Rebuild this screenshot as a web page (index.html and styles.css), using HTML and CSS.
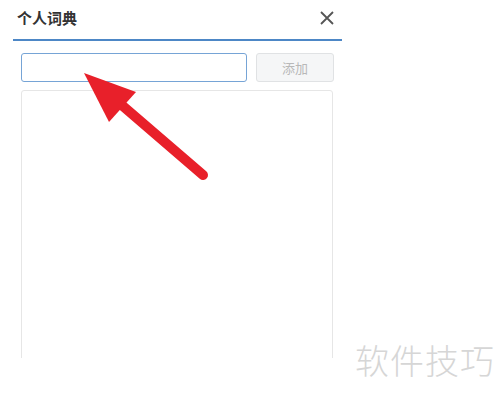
FILE: index.html
```html
<!DOCTYPE html>
<html lang="zh-CN">
<head>
  <meta charset="UTF-8">
  <meta name="viewport" content="width=device-width, initial-scale=1.0">
  <title>个人词典</title>
  <link rel="stylesheet" href="styles.css">
</head>
<body>

  <div class="dialog">
    <div class="dialog-header">
      <h1>个人词典</h1>
      <span class="close-btn">
        <svg width="16" height="16" viewBox="0 0 16 16">
          <path d="M2 2 L14 14 M14 2 L2 14" stroke="#555" stroke-width="1.8" fill="none"/>
        </svg>
      </span>
    </div>

    <div class="add-row">
      <input type="text" class="word-input">
      <button class="add-btn">添加</button>
    </div>

    <div class="word-list"></div>
  </div>

  <svg class="arrow" width="140" height="120" viewBox="0 0 140 120">
    <line x1="34" y1="28" x2="120" y2="102" stroke="#e8202a" stroke-width="10" stroke-linecap="round"/>
    <polygon points="1,0 53,19 26,49" fill="#e8202a"/>
  </svg>

  <div class="watermark">软件技巧</div>

</body>
</html>
```

FILE: styles.css
```css
body {
  margin: 0;
  background-color: #ffffff;
  font-family: 'Noto Sans CJK SC', 'Liberation Sans', sans-serif;
  height: 397px;
  overflow: hidden;
  position: relative;
}
.dialog {
  width: 329px;
  margin-left: 13px;
  height: 358px;
  overflow: hidden;
}
.dialog-header {
  display: flex;
  align-items: center;
  justify-content: space-between;
  height: 41px;
  border-bottom: 2px solid #4d87c6;
  padding: 0 7px 0 4px;
  box-sizing: border-box;
}
h1 {
  margin: 0;
  font-size: 15px;
  font-weight: bold;
  color: #333;
  line-height: 20px;
  padding-bottom: 4px;
}
.close-btn {
  display: flex;
  padding-bottom: 3px;
}
.add-row {
  display: flex;
  gap: 9px;
  padding: 0 8px;
  margin-top: 12px;
}
.word-input {
  width: 226px;
  height: 29px;
  box-sizing: border-box;
  border: 1px solid #76a4d6;
  border-radius: 3px;
  margin: 0;
  padding: 0 6px;
  outline: none;
}
.add-btn {
  width: 78px;
  height: 29px;
  box-sizing: border-box;
  border: 1px solid #e0e2e4;
  border-radius: 3px;
  background-color: #f5f6f7;
  color: #b8b8b8;
  font-family: 'Noto Sans CJK SC', sans-serif;
  font-size: 13px;
  padding: 0;
}
.word-list {
  margin: 8px 8px 0;
  width: 312px;
  height: 300px;
  box-sizing: border-box;
  border: 1px solid #e6e6e6;
  border-radius: 3px;
}
.arrow {
  position: absolute;
  left: 83px;
  top: 73px;
}
.watermark {
  position: absolute;
  left: 355px;
  top: 336px;
  font-size: 34px;
  font-weight: 300;
  color: #d6d6d6;
  line-height: 48px;
  letter-spacing: 1px;
}
```
